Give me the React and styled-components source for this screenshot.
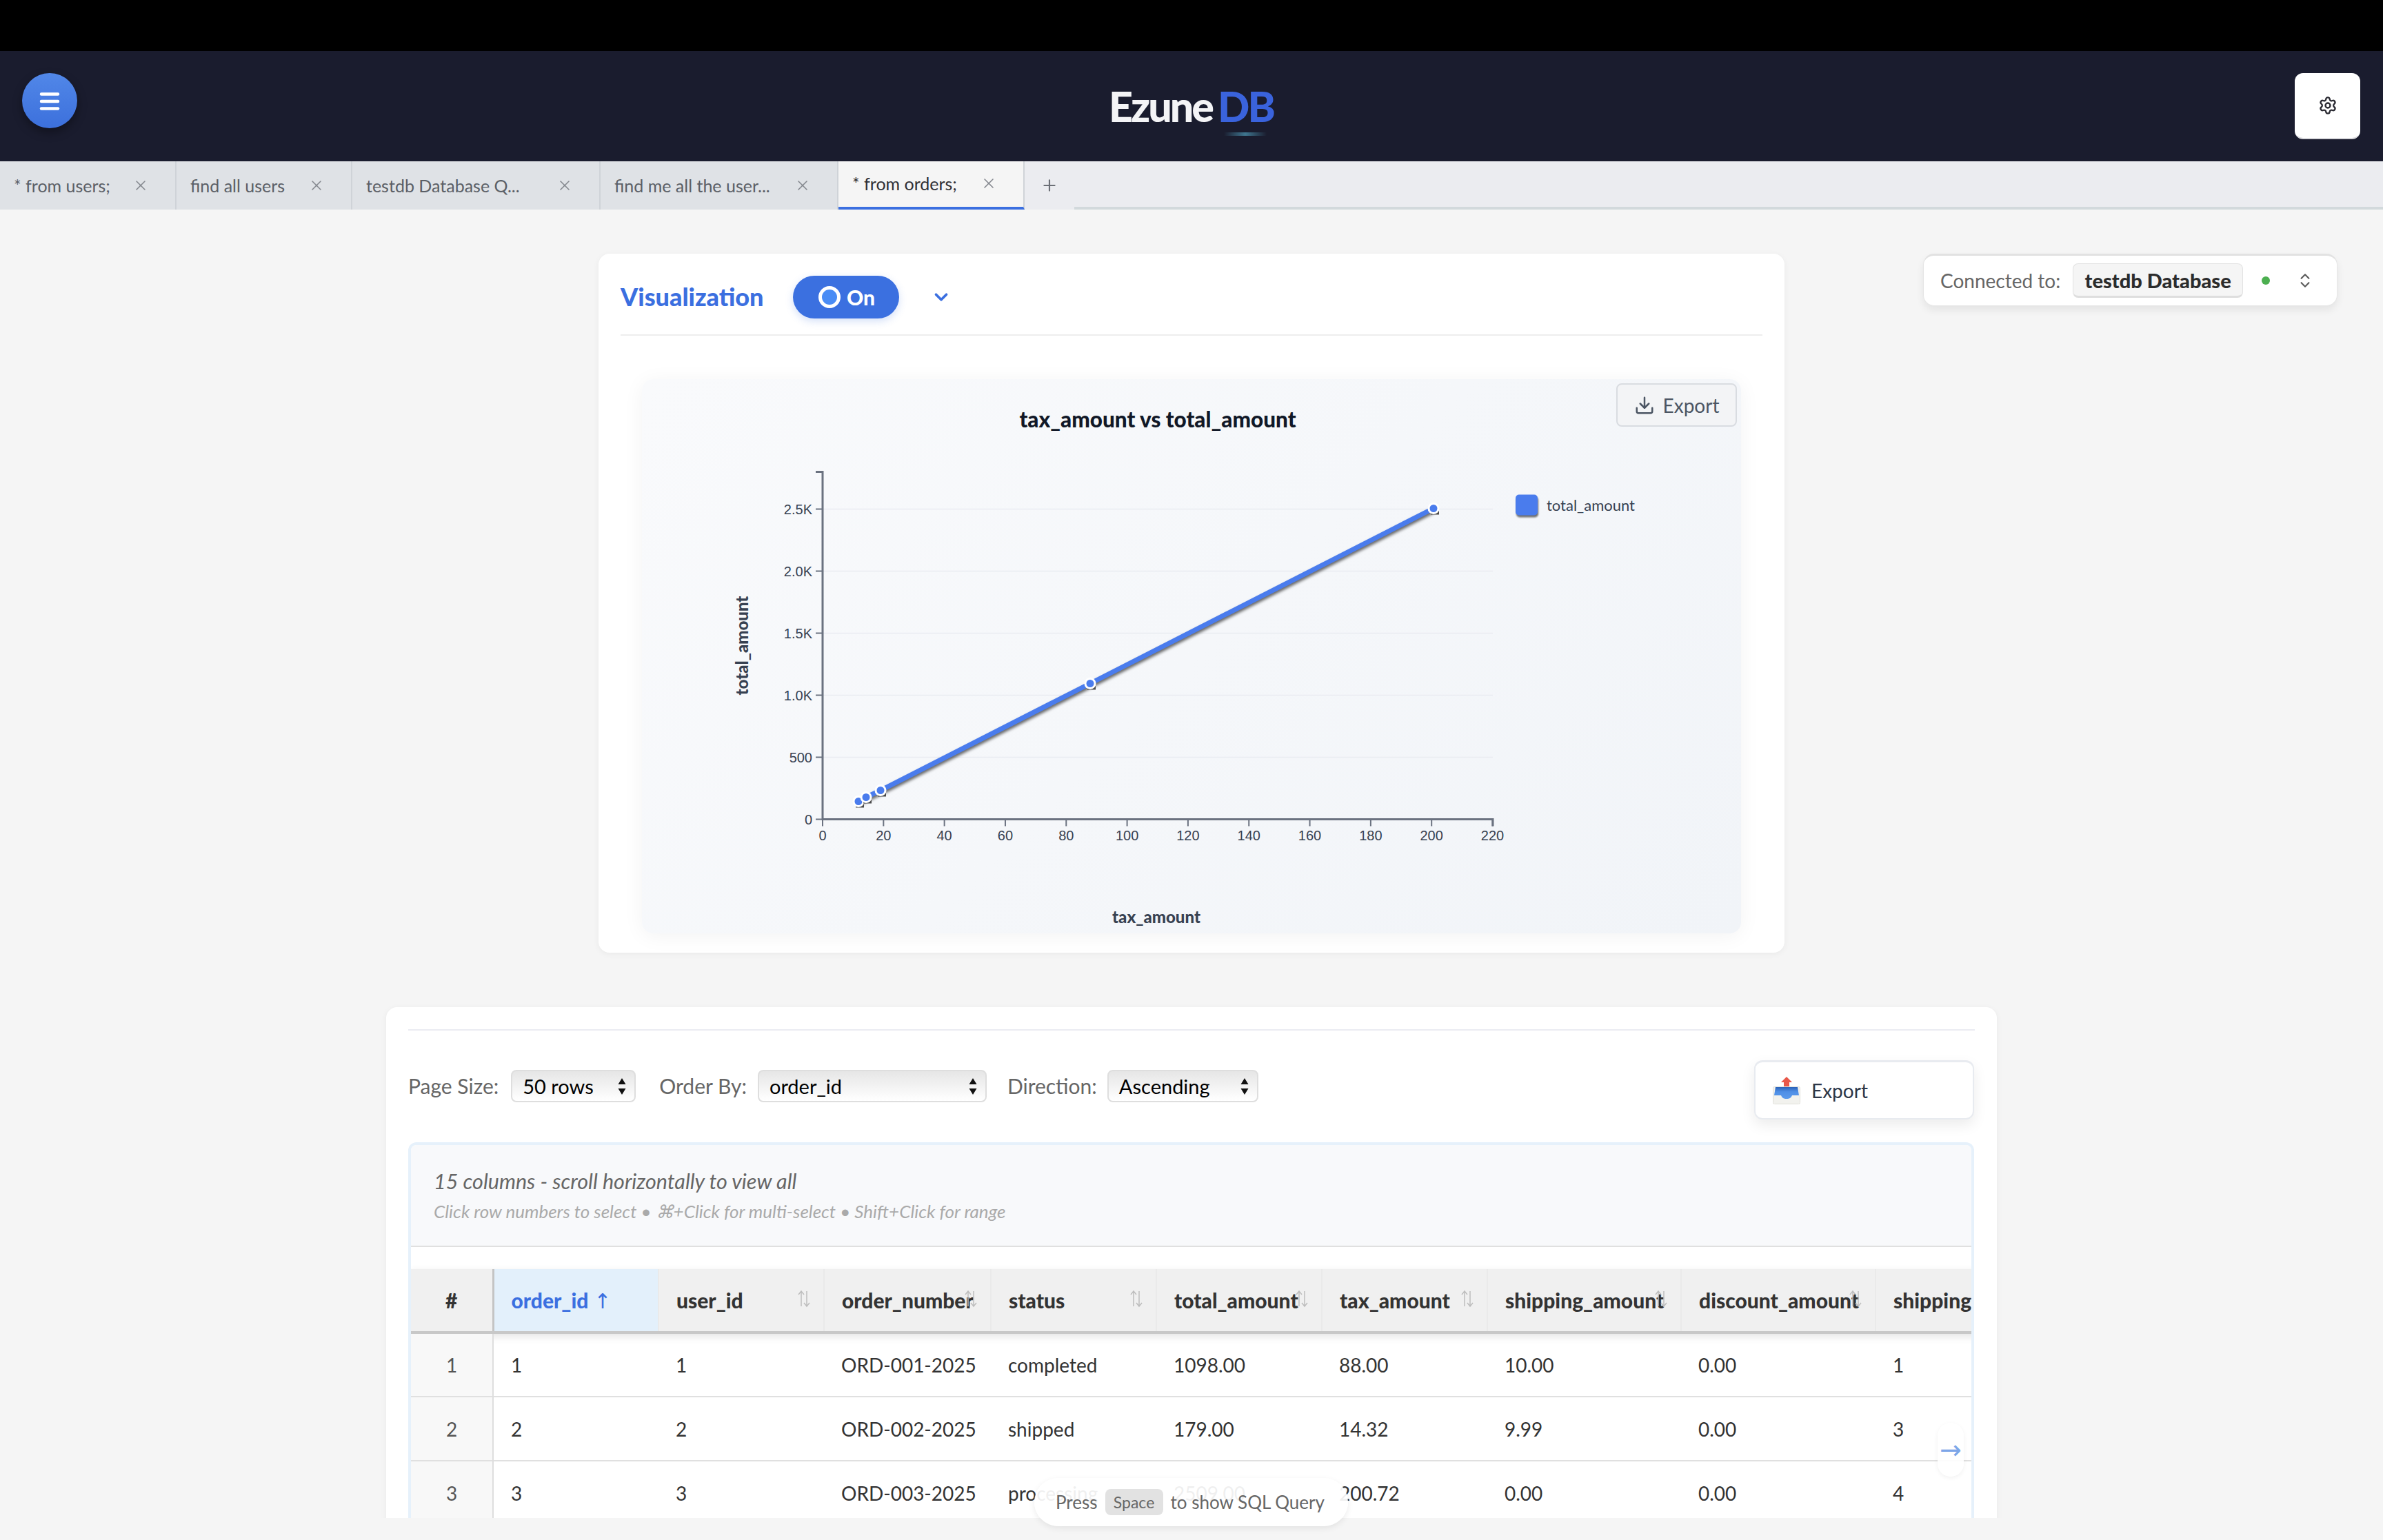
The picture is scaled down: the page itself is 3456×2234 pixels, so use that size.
import React from "react";
import styled, { createGlobalStyle } from "styled-components";
import { ChevronDown, ChevronsUpDown, Download, Menu, Plus, Settings, X } from "lucide-react";

const GlobalStyle = createGlobalStyle`
  html, body {
    margin: 0;
    padding: 0;
    background: #f5f5f5;
  }
  body {
    width: 3456px;
    height: 2234px;
    overflow: hidden;
    font-family: Lato, "Open Sans", sans-serif;
  }
`;

const Page = styled.div`
  position: relative;
  width: 3456px;
  height: 2234px;
  display: flex;
  flex-direction: column;
  background: #f5f5f5;
`;

const NotchBand = styled.div`
  height: 74px;
  background: #000;
`;

const Header = styled.header`
  height: 160px;
  box-sizing: border-box;
  padding: 32px 33px 0 32px;
  background: #1a1c2e;
  display: grid;
  grid-template-columns: 1fr auto 1fr;
  align-items: start;
`;

const MenuButton = styled.button`
  width: 80px;
  height: 80px;
  border: 0;
  border-radius: 50%;
  padding: 0;
  color: #fff;
  background: linear-gradient(180deg, #5187e8, #3c70dc);
  box-shadow: 0 6px 14px rgba(0, 0, 0, 0.35);
  display: flex;
  align-items: center;
  justify-content: center;
  svg {
    margin-top: 2px;
  }
`;

const Logo = styled.div`
  position: relative;
  margin-top: 13px;
  font-size: 61px;
  line-height: 70px;
  font-weight: 900;
  letter-spacing: -3px;
  color: #f4f4f6;
  span {
    color: #3a63dc;
    margin-left: 8px;
  }
  &::after {
    content: "";
    position: absolute;
    left: 167px;
    bottom: -8px;
    width: 62px;
    height: 5px;
    background: linear-gradient(90deg, transparent, #3f7690, transparent);
  }
`;

const SettingsButton = styled.button`
  justify-self: end;
  width: 95px;
  height: 96px;
  border: 0;
  border-radius: 12px;
  padding: 0;
  background: #fff;
  color: #2b2b33;
  border-bottom: 2px solid #d8d8dc;
  display: flex;
  align-items: center;
  justify-content: center;
`;

const TabBar = styled.nav`
  height: 70px;
  background: #ebecf0;
  display: flex;
`;

const Tab = styled.div`
  width: ${(p) => p.$width}px;
  box-sizing: border-box;
  height: 70px;
  padding: ${(p) => (p.$active ? "0 38px 2px 20px" : "0 38px 0 20px")};
  display: flex;
  align-items: center;
  justify-content: space-between;
  font-size: 25px;
  color: ${(p) => (p.$active ? "#2f2f35" : "#5b5f66")};
  background: ${(p) => (p.$active ? "#f5f5f5" : "#dfe2e6")};
  border-right: 2px solid #cfd3d8;
  border-bottom: ${(p) => (p.$active ? "4px solid #3b6fe0" : "0")};
  svg {
    color: #85888f;
    flex: none;
  }
`;

const AddTab = styled.div`
  width: 72px;
  height: 70px;
  display: flex;
  align-items: center;
  justify-content: center;
  color: #6b6f76;
`;

const TabRest = styled.div`
  flex: 1;
  border-bottom: 4px solid #d2d9dc;
  box-sizing: border-box;
`;

const Main = styled.main`
  position: relative;
  height: 1898px;
  overflow: hidden;
  padding-top: 64px;
  box-sizing: border-box;
  display: flex;
  flex-direction: column;
  align-items: center;
`;

const ConnectionBox = styled.div`
  position: absolute;
  top: 64px;
  right: 66px;
  width: 601px;
  height: 76px;
  box-sizing: border-box;
  padding-left: 24px;
  border-radius: 16px;
  background: #fff;
  border: 1px solid #e6e6e6;
  border-top: 3px solid #e2e2e2;
  box-shadow: 0 6px 12px rgba(0, 0, 0, 0.07);
  display: flex;
  align-items: center;
  font-size: 28px;
  color: #666;
  svg {
    color: #5c5c5c;
    margin-left: 38px;
  }
`;

const DbBadge = styled.span`
  margin-left: 18px;
  width: 247px;
  height: 50px;
  box-sizing: border-box;
  border-radius: 8px;
  border: 1px solid #e2e2e2;
  border-bottom: 3px solid #dedede;
  background: #f5f5f5;
  color: #2c2c2c;
  font-size: 29px;
  font-weight: 900;
  display: flex;
  align-items: center;
  justify-content: center;
`;

const StatusDot = styled.span`
  width: 12px;
  height: 12px;
  margin-left: 27px;
  border-radius: 50%;
  background: #4caf50;
`;

const VizCard = styled.section`
  width: 1720px;
  height: 1014px;
  flex: none;
  box-sizing: border-box;
  padding: 32px;
  background: #fff;
  border-radius: 16px;
  box-shadow: 0 2px 10px rgba(0, 0, 0, 0.05);
`;

const VizHead = styled.div`
  height: 87px;
  box-sizing: border-box;
  border-bottom: 2px solid #eeeeee;
  display: flex;
  align-items: flex-start;
  svg {
    color: #3b6fe0;
    margin: 16px 0 0 46px;
  }
`;

const VizTitle = styled.h2`
  width: 250px;
  margin: 0;
  font-size: 36px;
  line-height: 60px;
  font-weight: 900;
  color: #3b6fe0;
`;

const TogglePill = styled.div`
  width: 154px;
  height: 62px;
  box-sizing: border-box;
  padding-left: 37px;
  border-radius: 31px;
  background: #3b70e0;
  box-shadow: 0 4px 12px rgba(59, 112, 224, 0.22);
  display: flex;
  align-items: center;
  gap: 9px;
  color: #fff;
  font-size: 30px;
  font-weight: 900;
`;

const ToggleKnob = styled.span`
  width: 32px;
  height: 32px;
  box-sizing: border-box;
  border-radius: 50%;
  border: 5px solid #fff;
  background: #4a8cf5;
`;

const ChartCard = styled.div`
  position: relative;
  width: 1594px;
  height: 804px;
  margin: 63px 0 0 31px;
  border-radius: 16px;
  background: linear-gradient(135deg, #f9fafc, #f1f4f8);
  box-shadow: 0 4px 30px rgba(0, 0, 0, 0.05);
`;

const ChartSvg = styled.svg`
  display: block;
  width: 1594px;
  height: 804px;
  font-family: "Liberation Sans", Arial, sans-serif;
`;

const TickLabel = styled.text`
  font-size: 20px;
  fill: #374151;
`;

const ChartTitle = styled.text`
  font-family: Lato, sans-serif;
  font-size: 31.5px;
  font-weight: 900;
  fill: #111827;
`;

const AxisTitle = styled.text`
  font-family: Lato, sans-serif;
  font-size: 24px;
  font-weight: 900;
  fill: #374151;
`;

const LegendText = styled.text`
  font-family: Lato, sans-serif;
  font-size: 22px;
  fill: #374151;
`;

const DataLine = styled.polyline`
  fill: none;
  stroke: #4a7ced;
  stroke-width: 7;
  filter: drop-shadow(1px 3px 2px rgba(0, 0, 0, 0.6));
`;

const LegendSwatch = styled.rect`
  fill: #4a7ced;
  filter: drop-shadow(1px 3px 1px rgba(0, 0, 0, 0.55));
`;

const ChartExport = styled.button`
  position: absolute;
  top: 6px;
  right: 6px;
  width: 175px;
  height: 63px;
  box-sizing: border-box;
  border: 2px solid #d9dce1;
  border-radius: 8px;
  background: #f3f4f6;
  color: #4b5563;
  font-family: inherit;
  font-size: 28px;
  display: flex;
  align-items: center;
  justify-content: center;
  gap: 12px;
`;

const ResultsCard = styled.section`
  width: 2336px;
  flex: none;
  margin-top: 79px;
  box-sizing: border-box;
  padding: 32px 32px 0;
  background: #fff;
  border-radius: 16px 16px 0 0;
  box-shadow: 0 2px 10px rgba(0, 0, 0, 0.05);
`;

const Controls = styled.div`
  position: relative;
  height: 164px;
  box-sizing: border-box;
  border-top: 2px solid #ebecf2;
  padding-top: 57px;
  display: flex;
  align-items: flex-start;
`;

const ControlLabel = styled.span`
  font-size: 30px;
  line-height: 47px;
  color: #666;
  margin: 0 ${(p) => p.$after || 18}px 0 ${(p) => p.$gap || 0}px;
`;

const SelectBox = styled.div`
  width: ${(p) => p.$width}px;
  height: 47px;
  box-sizing: border-box;
  padding: 0 11px 0 15px;
  border: 2px solid #dedede;
  border-radius: 8px;
  background: linear-gradient(180deg, #e6e6e6, #ffffff);
  font-size: 29px;
  color: #000;
  display: flex;
  align-items: center;
  justify-content: space-between;
`;

const ExportCard = styled.button`
  position: absolute;
  top: 43px;
  right: 1px;
  width: 319px;
  height: 86px;
  box-sizing: border-box;
  padding-left: 25px;
  background: #fff;
  border: 2px solid #e8ebf0;
  border-top-width: 3px;
  border-radius: 12px;
  box-shadow: 0 8px 20px rgba(0, 0, 0, 0.08);
  font-family: inherit;
  font-size: 28px;
  color: #2d3748;
  display: flex;
  align-items: center;
  gap: 16px;
`;

const TableFrame = styled.div`
  position: relative;
  width: 2271px;
  box-sizing: border-box;
  border: 4px solid #e6f1fb;
  border-bottom: 0;
  border-radius: 12px 12px 0 0;
  overflow: hidden;
`;

const InfoPanel = styled.div`
  height: 148px;
  box-sizing: border-box;
  padding: 34px 33px 0;
  background: #f8f9fb;
  border-bottom: 2px solid #e0e0e0;
`;

const InfoMain = styled.div`
  font-size: 30.5px;
  line-height: 36px;
  font-style: italic;
  color: #666;
`;

const InfoSub = styled.div`
  margin-top: 11px;
  font-size: 26px;
  line-height: 30px;
  font-style: italic;
  color: #aaa;
`;

const Table = styled.table`
  margin-top: 32px;
  width: 2364px;
  table-layout: fixed;
  border-collapse: collapse;
  font-size: 28px;
  color: #333;
`;

const HeadRow = styled.tr`
  height: 92px;
  box-shadow: 0 5px 12px rgba(0, 0, 0, 0.12);
`;

const HeadCell = styled.th`
  position: relative;
  padding: 0 25px;
  text-align: ${(p) => (p.$center ? "center" : "left")};
  font-size: 30px;
  font-weight: 900;
  white-space: nowrap;
  color: ${(p) => (p.$sorted ? "#3b6fe0" : "#333")};
  background: ${(p) => (p.$sorted ? "#e3f0fb" : "#f0f0f0")};
  border-bottom: 4px solid #c8c8c8;
  border-right: 2px solid #eaeaea;
  border-left: ${(p) => (p.$sorted ? "3px solid #c4c4c4" : "0")};
`;

const SortIcon = styled.svg`
  position: absolute;
  right: 18px;
  top: 30px;
  width: 20px;
  height: 26px;
`;

const SortedArrow = styled.span`
  margin-left: 8px;
  font-family: "DejaVu Sans", sans-serif;
  font-weight: 400;
`;

const BodyRow = styled.tr`
  height: 93px;
  border-bottom: 2px solid #e0e0e0;
`;

const RowNum = styled.td`
  text-align: center;
  color: #555;
  background: #f8f8f8;
  border-right: 2px solid #dedede;
`;

const Cell = styled.td`
  padding: 0 25px;
  white-space: nowrap;
  overflow: hidden;
`;

const ScrollHint = styled.div`
  position: absolute;
  right: 11px;
  top: 403px;
  width: 38px;
  height: 78px;
  border-radius: 19px;
  background: rgba(255, 255, 255, 0.9);
  box-shadow: 0 2px 6px rgba(0, 0, 0, 0.06);
  color: #7da6e8;
  font-family: "DejaVu Sans", sans-serif;
  font-size: 38px;
  display: flex;
  align-items: center;
  justify-content: center;
`;

const SqlHint = styled.div`
  position: absolute;
  left: 1500px;
  top: 2144px;
  width: 455px;
  height: 70px;
  box-sizing: border-box;
  padding-left: 31px;
  border-radius: 35px;
  background: rgba(255, 255, 255, 0.92);
  box-shadow: 0 3px 10px rgba(0, 0, 0, 0.08);
  font-size: 26px;
  color: #666;
  display: flex;
  align-items: center;
  gap: 11px;
`;

const Kbd = styled.kbd`
  width: 84px;
  height: 38px;
  border-radius: 8px;
  background: #e2e2e2;
  font-family: inherit;
  font-size: 23px;
  display: flex;
  align-items: center;
  justify-content: center;
`;

const tabs = [
  { label: "* from users;", width: 256 },
  { label: "find all users", width: 255 },
  { label: "testdb Database Q...", width: 360 },
  { label: "find me all the user...", width: 345 },
  { label: "* from orders;", width: 270, active: true },
];

const columns = [
  { name: "order_id", width: 240 },
  { name: "user_id", width: 240 },
  { name: "order_number", width: 242 },
  { name: "status", width: 240 },
  { name: "total_amount", width: 240 },
  { name: "tax_amount", width: 240 },
  { name: "shipping_amount", width: 281 },
  { name: "discount_amount", width: 282 },
  { name: "shipping_address_id", width: 241 },
];

const rows = [
  ["1", "1", "ORD-001-2025", "completed", "1098.00", "88.00", "10.00", "0.00", "1"],
  ["2", "2", "ORD-002-2025", "shipped", "179.00", "14.32", "9.99", "0.00", "3"],
  ["3", "3", "ORD-003-2025", "processing", "2509.00", "200.72", "0.00", "0.00", "4"],
];

const yTicks = [
  { label: "2.5K", y: 737 },
  { label: "2.0K", y: 827 },
  { label: "1.5K", y: 917 },
  { label: "1.0K", y: 1007 },
  { label: "500", y: 1097 },
  { label: "0", y: 1187 },
];

const xTicks = [0, 20, 40, 60, 80, 100, 120, 140, 160, 180, 200, 220];

const points = [
  [1245, 1161],
  [1256, 1155],
  [1277, 1145],
  [1581, 990],
  [2079, 736],
];

const SortGlyph = () => (
  <SortIcon viewBox="0 0 20 26" fill="none" stroke="#bdbdbd" strokeWidth="1.5">
    <path d="M6 24V2M2 7l4-5 4 5" />
    <path d="M14 2v22M10 19l4 5 4-5" />
  </SortIcon>
);

const SelectArrows = () => (
  <svg width="14" height="26" viewBox="0 0 14 26" fill="#111">
    <path d="M7 1l5.5 9h-11zM7 25l-5.5-9h11z" />
  </svg>
);

// the outbox emoji on the export button
const OutboxIcon = () => (
  <svg width="40" height="40" viewBox="0 0 40 40">
    <defs>
      <linearGradient id="trayBlue" x1="0" y1="0" x2="0" y2="1">
        <stop offset="0" stopColor="#2a62b8" />
        <stop offset="0.4" stopColor="#4f8fe6" />
        <stop offset="1" stopColor="#5c9bec" />
      </linearGradient>
    </defs>
    <rect x="0.5" y="14.5" width="39" height="25" rx="2" fill="#f2f2ee" stroke="#e0e0da" />
    <path d="M4 15h32l2 12H28c-1.5 4-4 5-8 5s-6.500-1-8-5H2z" fill="url(#trayBlue)" />
    <path d="M20 0l8 8h-4v6h-8V8h-4z" fill="#e8584a" />
  </svg>
);

const Chart = () => (
  <ChartSvg viewBox="931 548.5 1594 804">
    <ChartTitle x="1679" y="618" textAnchor="middle">tax_amount vs total_amount</ChartTitle>
    {yTicks.slice(0, 5).map((t) => (
      <line key={t.label} x1="1193" x2="2165" y1={t.y} y2={t.y} stroke="#e9ecf1" strokeWidth="1.5" />
    ))}
    <path d="M1183 683H1193V1187H2165V1197" fill="none" stroke="#6b7280" strokeWidth="3" />
    {yTicks.map((t) => (
      <g key={t.label}>
        <line x1="1183" x2="1193" y1={t.y} y2={t.y} stroke="#6b7280" strokeWidth="2" />
        <TickLabel x="1178" y={t.y + 7} textAnchor="end">{t.label}</TickLabel>
      </g>
    ))}
    {xTicks.map((v) => (
      <g key={v}>
        <line x1={1193 + v * 4.416} x2={1193 + v * 4.416} y1="1187" y2="1197" stroke="#6b7280" strokeWidth="2" />
        <TickLabel x={1193 + v * 4.416} y="1217" textAnchor="middle">{v}</TickLabel>
      </g>
    ))}
    <AxisTitle x="1677" y="1337" textAnchor="middle">tax_amount</AxisTitle>
    <AxisTitle transform="translate(1085 935) rotate(-90)" textAnchor="middle">total_amount</AxisTitle>
    <DataLine points={points.map((p) => p.join(",")).join(" ")} />
    {points.map(([cx, cy]) => (
      <g key={cx}>
        <rect x={cx - 4} y={cy - 2} width="12" height="11" fill="#2e2e2e" opacity="0.85" />
        <circle cx={cx} cy={cy} r="7" fill="#4a7ced" stroke="#fff" strokeWidth="3" />
      </g>
    ))}
    <LegendSwatch x="2198" y="716" width="32" height="30" rx="5" />
    <LegendText x="2243" y="739">total_amount</LegendText>
  </ChartSvg>
);

export default function App() {
  return (
    <Page>
      <GlobalStyle />
      <NotchBand />
      <Header>
        <MenuButton aria-label="menu">
          <Menu size={36} strokeWidth={3} />
        </MenuButton>
        <Logo>
          Ezune<span>DB</span>
        </Logo>
        <SettingsButton aria-label="settings">
          <Settings size={28} strokeWidth={2} />
        </SettingsButton>
      </Header>
      <TabBar>
        {tabs.map((t) => (
          <Tab key={t.label} $width={t.width} $active={t.active}>
            {t.label}
            <X size={24} strokeWidth={1.6} />
          </Tab>
        ))}
        <AddTab>
          <Plus size={26} strokeWidth={2} />
        </AddTab>
        <TabRest />
      </TabBar>
      <Main>
        <ConnectionBox>
          Connected to:
          <DbBadge>testdb Database</DbBadge>
          <StatusDot />
          <ChevronsUpDown size={26} strokeWidth={2} />
        </ConnectionBox>
        <VizCard>
          <VizHead>
            <VizTitle>Visualization</VizTitle>
            <TogglePill>
              <ToggleKnob />
              On
            </TogglePill>
            <ChevronDown size={30} strokeWidth={3} />
          </VizHead>
          <ChartCard>
            <Chart />
            <ChartExport>
              <Download size={30} strokeWidth={2} />
              Export
            </ChartExport>
          </ChartCard>
        </VizCard>
        <ResultsCard>
          <Controls>
            <ControlLabel>Page Size:</ControlLabel>
            <SelectBox $width={181}>
              50 rows
              <SelectArrows />
            </SelectBox>
            <ControlLabel $gap={34} $after={16}>Order By:</ControlLabel>
            <SelectBox $width={332}>
              order_id
              <SelectArrows />
            </SelectBox>
            <ControlLabel $gap={30} $after={15}>Direction:</ControlLabel>
            <SelectBox $width={219}>
              Ascending
              <SelectArrows />
            </SelectBox>
            <ExportCard>
              <OutboxIcon />
              Export
            </ExportCard>
          </Controls>
          <TableFrame>
            <InfoPanel>
              <InfoMain>15 columns - scroll horizontally to view all</InfoMain>
              <InfoSub>Click row numbers to select • ⌘+Click for multi-select • Shift+Click for range</InfoSub>
            </InfoPanel>
            <Table>
              <colgroup>
                <col width="119" />
                {columns.map((c) => (
                  <col key={c.name} width={c.width} />
                ))}
              </colgroup>
              <thead>
                <HeadRow>
                  <HeadCell $center>#</HeadCell>
                  {columns.map((c, i) => (
                    <HeadCell key={c.name} $sorted={i === 0}>
                      {c.name}
                      {i === 0 ? <SortedArrow>↑</SortedArrow> : <SortGlyph />}
                    </HeadCell>
                  ))}
                </HeadRow>
              </thead>
              <tbody>
                {rows.map((row, i) => (
                  <BodyRow key={row[0]}>
                    <RowNum>{i + 1}</RowNum>
                    {row.map((v, j) => (
                      <Cell key={j}>{v}</Cell>
                    ))}
                  </BodyRow>
                ))}
              </tbody>
            </Table>
            <ScrollHint>→</ScrollHint>
          </TableFrame>
        </ResultsCard>
      </Main>
      <SqlHint>
        Press
        <Kbd>Space</Kbd>
        to show SQL Query
      </SqlHint>
    </Page>
  );
}
